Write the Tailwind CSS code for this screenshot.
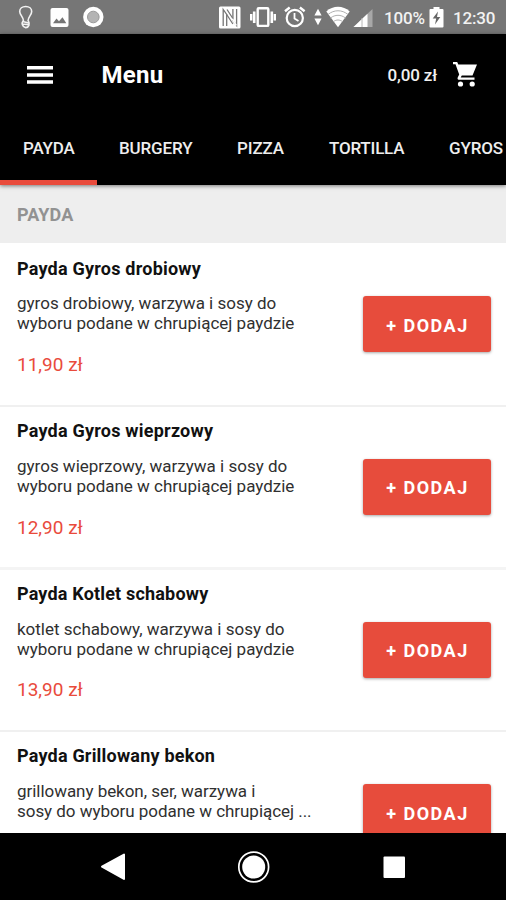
<!DOCTYPE html>
<html lang="pl">
<head>
<meta charset="utf-8">
<title>Menu</title>
<script src="https://cdn.jsdelivr.net/npm/@tailwindcss/browser@4"></script>
</head>
<body class="bg-black">
<div class="w-[506px] h-[900px] overflow-hidden flex flex-col bg-white font-['Roboto','Noto_Sans',sans-serif]">
  <!-- Status bar -->
  <div class="h-[34px] shrink-0 bg-[#767676] flex items-center text-white">
    <svg class="ml-[17px] w-[18px] h-[34px]" viewBox="0 0 18 34" fill="none" stroke="#f2f2f2" stroke-width="1.600"><path d="M6.500 21C6.500 17 2.700 15 2.700 11.500C2.700 8.500 5.200 6.500 8.700 6.500S14.700 8.500 14.700 11.500C14.700 15 11 17 11 21"/><path d="M5.500 21.500l6.500 1.500M5.500 24l6.500 .8M6 21C4.500 23 5 27 8.700 27.600C12 27.500 13 24 11.300 21"/></svg>
    <svg class="ml-[15px] w-[19px] h-[34px]" viewBox="0 0 19 34"><rect x="0.500" y="8" width="18" height="19" rx="2" fill="#fff"/><path d="M3 23.200l3.500-4.700 2.500 2.800 3.500-4 3.800 5.900z" fill="#767676"/></svg>
    <svg class="ml-[14px] w-[21px] h-[34px]" viewBox="0 0 21 34"><circle cx="10.300" cy="17" r="10.200" fill="#fff"/><circle cx="10.300" cy="17" r="5.800" fill="#b4b4b4" stroke="#999" stroke-width="1"/></svg>
    <svg class="ml-[114px] w-[24px] h-[34px]" viewBox="0 0 24 34"><rect x="1" y="6.500" width="21.500" height="22" rx="1.500" fill="#fff"/><path d="M5.200 26V9.500L8.700 14.500V26M18.600 9V25.500L14.900 20.500V9" fill="none" stroke="#767676" stroke-width="1.300"/><path d="M8.700 9.500L18.300 25.500" fill="none" stroke="#fff" stroke-width="1.500"/><path d="M9 9.500l5.900 9M8.700 14.500L14.900 24" fill="none" stroke="#767676" stroke-width="1.300"/></svg>
    <svg class="ml-[7px] w-[28px] h-[34px]" viewBox="0 0 28 34" fill="none" stroke="#fff"><rect x="8.700" y="8.300" width="10.600" height="17.600" rx="1" stroke-width="2.400"/><path d="M5.200 11.500v11.500M22.800 11.500v11.500" stroke-width="2.600"/><path d="M2.200 14v6.500M25.800 14v6.500" stroke-width="2.400"/></svg>
    <svg class="ml-[7px] w-[22px] h-[34px]" viewBox="0 0 22 34" fill="none" stroke="#fff"><circle cx="10.800" cy="18" r="8.100" stroke-width="2.200"/><path d="M1 11.300l4.700-3.800M20.600 11.300l-4.700-3.800" stroke-width="2.400"/><path d="M10.500 13v5.500l4 2.500" stroke-width="1.800"/></svg>
    <svg class="ml-[8px] w-[8px] h-[34px]" viewBox="0 0 8 34" fill="#fff"><path d="M4 8.800l3.600 6.700H.4zM4 25.200l3.600-6.700H.4z"/></svg>
    <svg class="ml-[4px] w-[24px] h-[34px]" viewBox="0 0 24 34"><path d="M12 27.300L.3 11.500C7 5.300 17 5.300 23.700 11.500z" fill="#fff"/><path d="M2 14.500c6-5 14-5 20 0M4.500 18c4.500-3.600 10.500-3.600 15 0M7.500 21.500c3-2 6-2 9 0" fill="none" stroke="#b0b0b0" stroke-width="1"/></svg>
    <svg class="ml-[3px] w-[20px] h-[34px]" viewBox="0 0 20 34"><path d="M0.500 27L19.500 9v18z" fill="#a8a8a8"/><path d="M0.500 27L14.500 13.700V27z" fill="#fff"/><path d="M9 18v9" stroke="#b8b8b8" stroke-width="1"/></svg>
    <span class="ml-[11px] w-[45px] whitespace-nowrap text-[17px] font-medium leading-[34px] text-[#f2f2f2] tracking-[-0.2px] relative top-[0.5px]">100%</span>
    <svg class="w-[15px] h-[34px]" viewBox="0 0 15 34"><path d="M4.500 7h6v2h3a1 1 0 0 1 1 1v16.500a1 1 0 0 1-1 1h-12a1 1 0 0 1-1-1V10a1 1 0 0 1 1-1h3z" fill="#fff"/><path d="M9 11.500l-5.300 7h3.500l-1.200 6 5.300-7.500H8z" fill="#666"/></svg>
    <span class="ml-[9px] whitespace-nowrap text-[17px] font-medium leading-[34px] text-[#f2f2f2] tracking-[-0.2px] relative top-[0.5px]">12:30</span>
  </div>
  <!-- App bar -->
  <header class="h-[151px] shrink-0 bg-black text-white relative shadow-[0_1px_4px_rgba(0,0,0,0.5)] flex flex-col">
    <div class="h-[81px] flex items-center">
      <svg class="ml-[27px] w-[26px] h-[18px]" viewBox="0 0 26 18" fill="#fff"><path d="M0 0h26v3.500H0zM0 7.200h26v3.500H0zM0 14.300h26v3.500H0z"/></svg>
      <h1 class="ml-[48.500px] text-[24px] font-bold leading-[30px] tracking-[0.3px]">Menu</h1>
      <span class="ml-auto text-[17px] font-medium leading-[24px] tracking-[-0.150px] text-[#f0f0f0]">0,00 zł</span>
      <svg class="ml-[16px] mr-[28px] w-[25px] h-[27px]" viewBox="0 0 25 27" fill="#fff"><path d="M0 1H4.200L5.300 3.400H24L19.500 14.400H8.800L7.700 16.500H21.500V18.700H5.500Q4 18.300 4.700 16.600L6.200 13.500L2.500 3.200H0z"/><circle cx="7.500" cy="23" r="2.600"/><circle cx="19.200" cy="23" r="2.600"/></svg>
    </div>
    <nav class="h-[70px] flex overflow-hidden whitespace-nowrap text-[17px] font-medium leading-[66px] text-[#eee]">
      <div class="w-[97px] shrink-0 pl-[23px] border-b-[5px] border-[#e94b3c] tracking-[-0.150px]">PAYDA</div>
      <div class="w-[118px] shrink-0 pl-[22px] tracking-[-0.150px]">BURGERY</div>
      <div class="w-[92px] shrink-0 pl-[22px] tracking-[-0.100px]">PIZZA</div>
      <div class="w-[120px] shrink-0 pl-[22px] tracking-[-0.200px]">TORTILLA</div>
      <div class="w-[98px] shrink-0 pl-[22px] tracking-[-0.150px]">GYROS</div>
    </nav>
  </header>
  <!-- Product list -->
  <main class="h-[648px] shrink-0 overflow-hidden">
    <h2 class="h-[58px] bg-[#eee] pl-[17px] text-[18px] font-bold leading-[60px] text-[#929292] tracking-[0.100px]">PAYDA</h2>
    <article class="h-[164px] pl-[17px] pr-[15px] flex justify-between border-b-2 border-[#f0f0f0]">
      <div class="pt-[14px] whitespace-nowrap">
        <h3 class="text-[18px] font-bold leading-[24px] tracking-[0.220px] text-[#111]">Payda Gyros drobiowy</h3>
        <p class="mt-[13px] text-[17px] leading-[19.500px] text-[#303030]">gyros drobiowy, warzywa i sosy do<br>wyboru podane w chrupiącej paydzie</p>
        <p class="mt-[20px] text-[19px] leading-[24px] text-[#e94b3c]">11,90 zł</p>
      </div>
      <button class="mt-[53px] w-[128px] h-[56px] rounded-[3px] bg-[#e74c3c] text-white text-[18px] font-bold tracking-[1.500px] pl-[1px] pt-[3px] shadow-[0_1px_3px_rgba(0,0,0,0.35)]">+ DODAJ</button>
    </article>
    <article class="h-[163px] pl-[17px] pr-[15px] flex justify-between border-b-[3px] border-[#f4f4f4]">
      <div class="pt-[12px] whitespace-nowrap">
        <h3 class="text-[18px] font-bold leading-[24px] tracking-[0.220px] text-[#111]">Payda Gyros wieprzowy</h3>
        <p class="mt-[14px] text-[17px] leading-[19.500px] text-[#303030]">gyros wieprzowy, warzywa i sosy do<br>wyboru podane w chrupiącej paydzie</p>
        <p class="mt-[20px] text-[19px] leading-[24px] text-[#e94b3c]">12,90 zł</p>
      </div>
      <button class="mt-[52px] w-[128px] h-[56px] rounded-[3px] bg-[#e74c3c] text-white text-[18px] font-bold tracking-[1.500px] pl-[1px] pt-[1px] shadow-[0_1px_3px_rgba(0,0,0,0.35)]">+ DODAJ</button>
    </article>
    <article class="h-[162px] pl-[17px] pr-[15px] flex justify-between border-b-2 border-[#f0f0f0]">
      <div class="pt-[12px] whitespace-nowrap">
        <h3 class="text-[18px] font-bold leading-[24px] tracking-[0.180px] text-[#111]">Payda Kotlet schabowy</h3>
        <p class="mt-[14px] text-[17px] leading-[19.500px] text-[#303030]">kotlet schabowy, warzywa i sosy do<br>wyboru podane w chrupiącej paydzie</p>
        <p class="mt-[19px] text-[19px] leading-[24px] text-[#e94b3c]">13,90 zł</p>
      </div>
      <button class="mt-[52px] w-[128px] h-[56px] rounded-[3px] bg-[#e74c3c] text-white text-[18px] font-bold tracking-[1.500px] pl-[1px] pt-[1px] shadow-[0_1px_3px_rgba(0,0,0,0.35)]">+ DODAJ</button>
    </article>
    <article class="h-[163px] pl-[17px] pr-[15px] flex justify-between">
      <div class="pt-[12px] whitespace-nowrap">
        <h3 class="text-[18px] font-bold leading-[24px] tracking-[0.200px] text-[#111]">Payda Grillowany bekon</h3>
        <p class="mt-[14px] text-[17px] leading-[19.500px] tracking-[-0.040px] text-[#303030]">grillowany bekon, ser, warzywa i<br>sosy do wyboru podane w chrupiącej ...</p>
      </div>
      <button class="mt-[52px] w-[128px] h-[56px] rounded-[3px] bg-[#e74c3c] text-white text-[18px] font-bold tracking-[1.500px] pl-[1px] pt-[3px] shadow-[0_1px_3px_rgba(0,0,0,0.35)]">+ DODAJ</button>
    </article>
  </main>
  <!-- System navigation -->
  <footer class="h-[67px] shrink-0 bg-black flex items-center">
    <svg class="ml-[100px] w-[26px] h-[30px]" viewBox="0 0 26 30"><path d="M24 2.500v24.500L2 14.700z" fill="#fff" stroke="#fff" stroke-width="2" stroke-linejoin="round"/></svg>
    <svg class="ml-[111px] w-[34px] h-[34px]" viewBox="0 0 34 34"><circle cx="16.700" cy="17" r="11.500" fill="#fff"/><circle cx="16.700" cy="17" r="14.900" fill="none" stroke="#fff" stroke-width="1.700"/></svg>
    <svg class="ml-[112px] w-[22px] h-[22px]" viewBox="0 0 22 22"><rect x="0.500" y="0.500" width="21.500" height="21.500" rx="1" fill="#fff"/></svg>
  </footer>
</div>
</body>
</html>
